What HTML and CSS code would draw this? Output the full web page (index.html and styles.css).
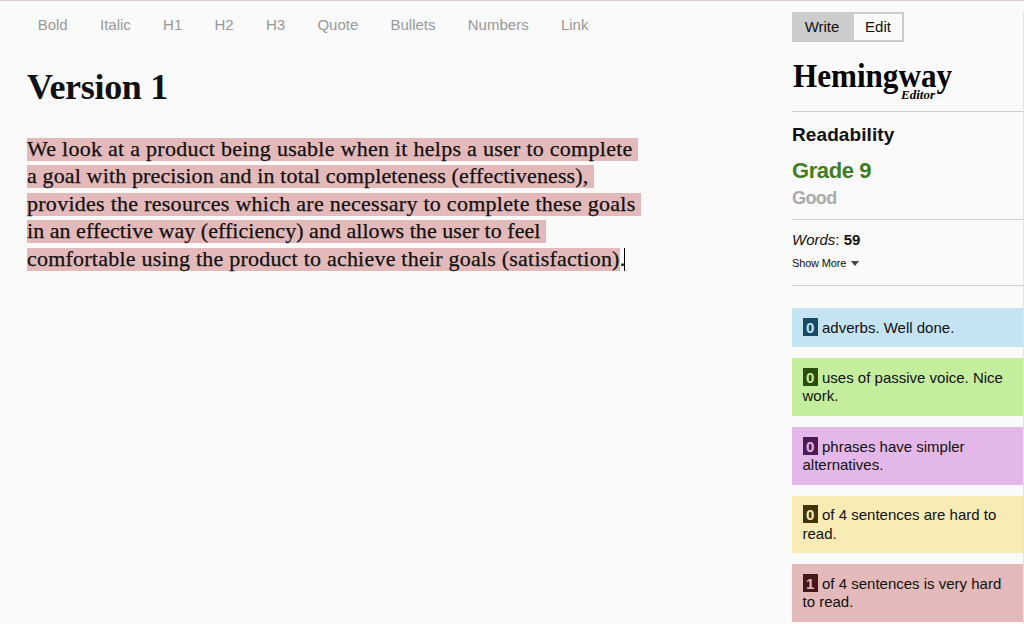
FILE: index.html
```html
<!DOCTYPE html>
<html lang="en">
<head>
    <meta charset="UTF-8">
    <meta name="viewport" content="width=device-width, initial-scale=1.0">
    <title>Hemingway Editor</title>
    <link rel="stylesheet" href="styles.css">
</head>
<body>
    <main class="editor">
        <nav class="toolbar">
            <a class="bold">Bold</a>
            <a class="italic">Italic</a>
            <a class="h1">H1</a>
            <a class="h2">H2</a>
            <a class="h3">H3</a>
            <a class="quote">Quote</a>
            <a class="bullets">Bullets</a>
            <a class="numbers">Numbers</a>
            <a class="link">Link</a>
        </nav>
        <h1>Version 1</h1>
        <div class="text">
            <div class="line line-1"><mark>We look at a product being usable when it helps a user to complete </mark></div>
            <div class="line line-2"><mark>a goal with precision and in total completeness (effectiveness), </mark></div>
            <div class="line line-3"><mark>provides the resources which are necessary to complete these goals </mark></div>
            <div class="line line-4"><mark>in an effective way (efficiency) and allows the user to feel </mark></div>
            <div class="line line-5"><mark>comfortable using the product to achieve their goals (satisfaction)</mark>.<span class="caret"></span></div>
        </div>
    </main>

    <aside class="sidebar">
        <div class="mode">
            <span class="write">Write</span>
            <span class="edit">Edit</span>
        </div>
        <svg class="logo" width="164" height="44" viewBox="0 0 164 44">
            <text class="logo-name" x="1" y="26.5" textLength="159" lengthAdjust="spacingAndGlyphs">Hemingway</text>
            <text class="logo-sub" x="109" y="39" textLength="34" lengthAdjust="spacingAndGlyphs">Editor</text>
        </svg>
        <section class="readability">
            <h2>Readability</h2>
            <div class="grade">Grade 9</div>
            <div class="good">Good</div>
        </section>
        <section class="stats">
            <div class="words"><i>Words</i>: <b>59</b></div>
            <div class="more">Show More <span class="arrow"></span></div>
        </section>
        <div class="cards">
            <div class="card adverbs"><b>0</b> adverbs. Well done.</div>
            <div class="card passive"><b>0</b> uses of passive voice. Nice work.</div>
            <div class="card phrases"><b>0</b> phrases have simpler alternatives.</div>
            <div class="card hard"><b>0</b> of 4 sentences are hard to read.</div>
            <div class="card very-hard"><b>1</b> of 4 sentences is very hard to read.</div>
        </div>
    </aside>
</body>
</html>
```
FILE: styles.css
```css
* {
    box-sizing: border-box;
}
body {
    margin: 0;
    height: 624px;
    display: flex;
    overflow: hidden;
    background-color: #fafafa;
    border-top: 1px solid #dfcccd;
    font-family: "Liberation Sans", Arial, sans-serif;
    color: #111;
}
.editor {
    width: 792px;
    padding-left: 27px;
}
.toolbar {
    display: flex;
    gap: 32.25px;
    padding: 15px 0 0 10.7px;
    font-size: 15px;
    line-height: 18px;
    color: #999;
}
h1 {
    margin: 32px 0 0;
    font-family: "Liberation Serif", serif;
    font-size: 36px;
    line-height: 42px;
    letter-spacing: -0.3px;
}
.text {
    display: flex;
    flex-direction: column;
    gap: 4.4px;
    margin-top: 30px;
    font-family: "Liberation Serif", serif;
    font-size: 22px;
    line-height: 22px;
    -webkit-text-stroke: 0.25px #111;
}
.line {
    display: flex;
    height: 23px;
    white-space: pre;
}
.line-1 {
    letter-spacing: 0.27px;
}
.line-2 {
    letter-spacing: 0.14px;
}
.line-3 {
    letter-spacing: 0.27px;
}
.line-4 {
    letter-spacing: 0.04px;
}
.line-5 {
    letter-spacing: 0.22px;
}
mark {
    background-color: #e4b9b9;
    color: #111;
}
.caret {
    width: 1px;
    margin-left: -1px;
    background-color: #000;
}
.sidebar {
    width: 232px;
    height: 613px;
    margin-top: 11px;
    border-right: 1px solid #e4e4e4;
}
.mode {
    display: flex;
    width: 112px;
    height: 30px;
    border: 2px solid #ccc;
    font-size: 15px;
    line-height: 26px;
    text-align: center;
}
.write {
    width: 60px;
    background-color: #ccc;
    padding-right: 4px;
}
.edit {
    flex: 1;
}
.logo {
    display: block;
    margin-top: 18px;
    overflow: visible;
    font-family: "Liberation Serif", serif;
    font-weight: bold;
}
.logo-name {
    font-size: 33px;
}
.logo-sub {
    font-size: 12px;
    font-style: italic;
}
.readability {
    height: 109px;
    margin-top: 7px;
    padding-top: 12px;
    border-top: 1px solid #d0d0d0;
    border-bottom: 1px solid #d0d0d0;
    font-weight: bold;
}
h2 {
    margin: 0;
    font-size: 19px;
    line-height: 21px;
    letter-spacing: 0.1px;
}
.grade {
    margin-top: 13px;
    font-size: 22px;
    line-height: 26px;
    letter-spacing: -0.4px;
    color: #417d1f;
}
.good {
    margin-top: 4px;
    font-size: 18px;
    line-height: 21px;
    letter-spacing: -0.6px;
    color: #aaa;
}
.stats {
    height: 66px;
    padding-top: 10px;
    border-bottom: 1px solid #d0d0d0;
}
.words {
    font-size: 15px;
    line-height: 20px;
}
.more {
    display: flex;
    align-items: center;
    gap: 5px;
    margin-top: 6px;
    font-size: 11px;
    line-height: 14px;
    letter-spacing: -0.15px;
}
.arrow {
    border: 4px solid transparent;
    border-top: 5px solid #444;
    border-bottom: 0;
}
.cards {
    display: flex;
    flex-direction: column;
    gap: 11px;
    margin-top: 22px;
}
.card {
    height: 57.7px;
    padding: 10.6px 10.5px;
    font-size: 15px;
    line-height: 18.4px;
}
.card b {
    padding: 1px 3.5px 0;
}
.adverbs {
    height: 39.3px;
    background-color: #c4e3f3;
}
.adverbs b {
    background-color: #144c66;
    color: #c4e3f3;
}
.passive {
    background-color: #c4ed9d;
}
.passive b {
    background-color: #2a4d0c;
    color: #c4ed9d;
}
.phrases {
    background-color: #e3b7e8;
}
.phrases b {
    background-color: #4e1a55;
    color: #e3b7e8;
}
.hard {
    background-color: #f7ebb6;
}
.hard b {
    background-color: #403509;
    color: #f7ebb6;
}
.very-hard {
    background-color: #e4b9b9;
}
.very-hard b {
    background-color: #441719;
    color: #e4b9b9;
}
```
